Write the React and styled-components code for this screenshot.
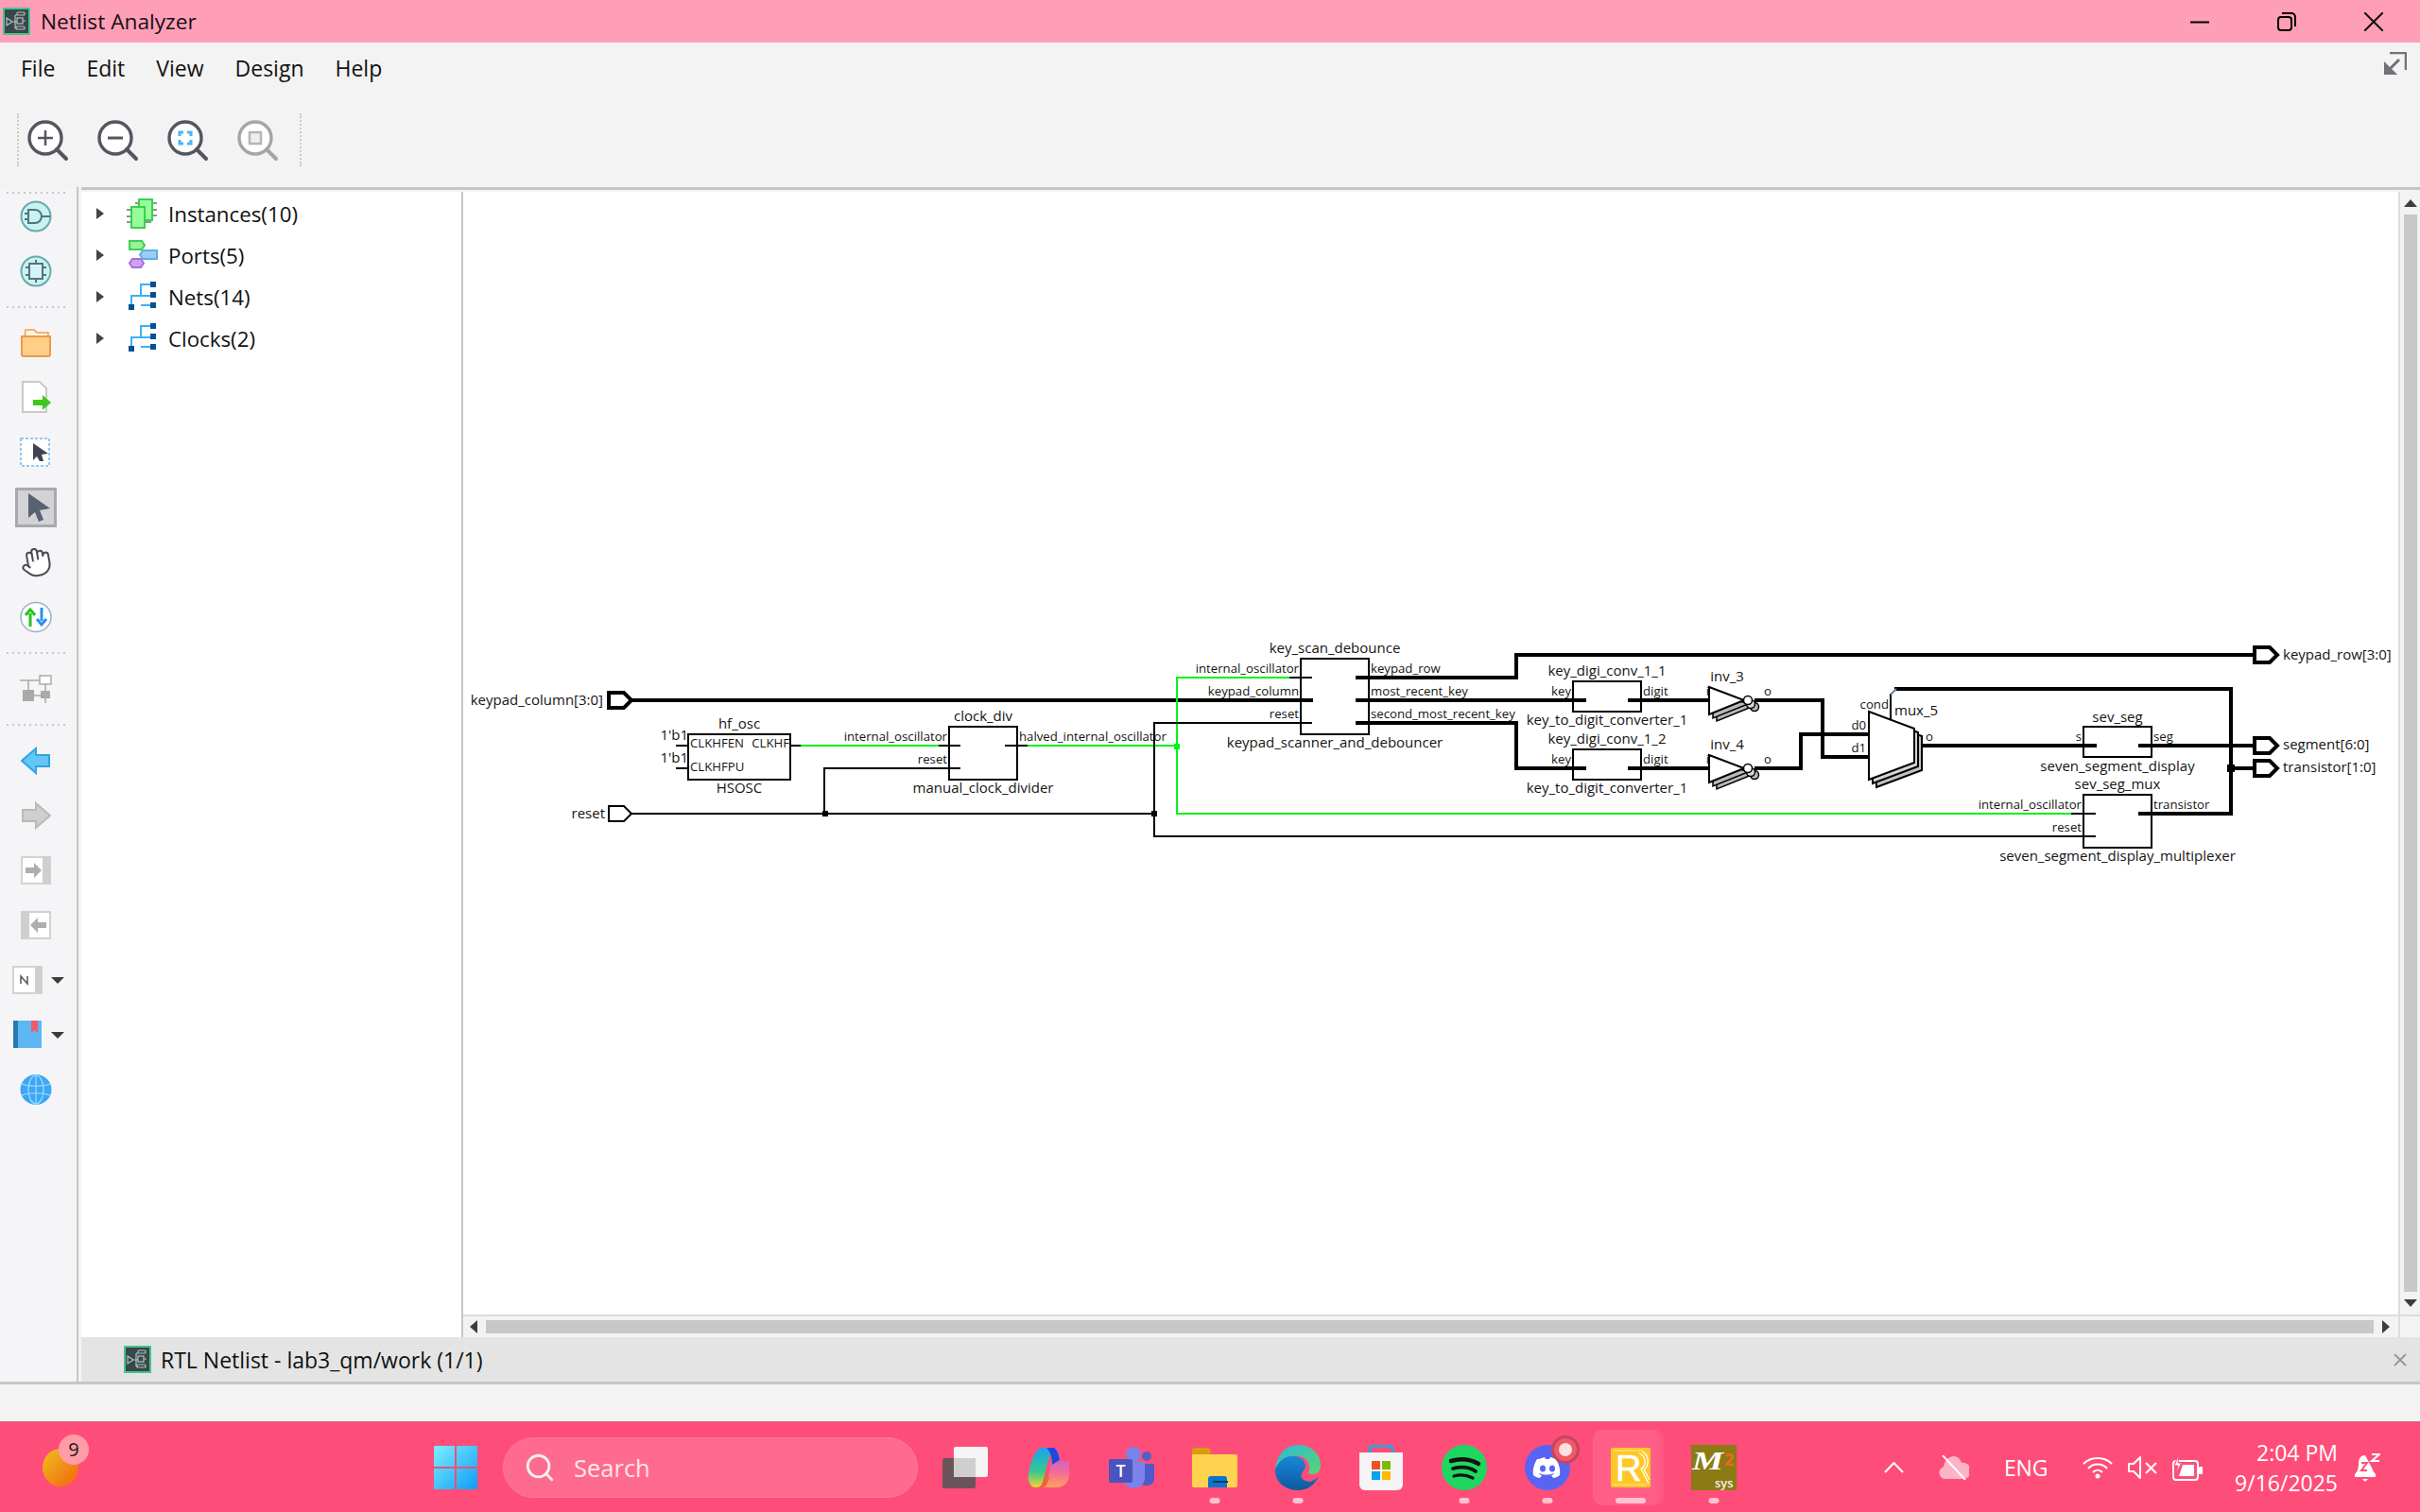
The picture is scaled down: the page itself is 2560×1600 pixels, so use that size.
import React from 'react';
import styled, { createGlobalStyle } from 'styled-components';
import { Search, Hand } from 'lucide-react';

const UI_FONT = '"Open Sans", "Noto Sans", "Liberation Sans", sans-serif';

const GlobalStyle = createGlobalStyle`
	html, body { margin: 0; padding: 0; background: #f3f3f3; }
	* { box-sizing: border-box; }
`;

const Screen = styled.div`
	width: 2560px;
	height: 1600px;
	display: flex;
	flex-direction: column;
	overflow: hidden;
	font-family: ${UI_FONT};
	color: #111;
`;

/* ---- title + menu ---- */
const TitleBar = styled.div`
	height: 45px;
	background: #ff9fb7;
	display: flex;
	align-items: center;
	padding-left: 3px;
`;
const TitleText = styled.span`
	font-size: 22.7px;
	margin-left: 11px;
	color: #141014;
`;
const WindowButtons = styled.div`
	margin-left: auto;
	display: flex;
	align-items: center;
	gap: 72px;
	padding-right: 39px;
`;
const MenuBar = styled.div`
	height: 54px;
	background: #f3f3f3;
	display: flex;
	align-items: center;
	padding: 0 14px 0 22px;
	gap: 33px;
	font-size: 23px;
`;
const MenuItem = styled.span``;
const ExpandButton = styled.div`
	margin-left: auto;
	display: flex;
	margin-top: -10px;
`;
const ToolBar = styled.div`
	height: 99px;
	background: #f3f3f3;
	display: flex;
	align-items: center;
`;
const ToolGroup = styled.div`
	margin-left: 18px;
	height: 56px;
	width: 301px;
	margin-top: -2px;
	border-left: 2px dotted #c9c9c9;
	border-right: 2px dotted #c9c9c9;
	display: flex;
	align-items: center;
	padding: 3px 0 0 9px;
	gap: 30px;
`;

/* ---- body ---- */
const Body = styled.div`
	height: 1267px;
	display: flex;
	background: #f3f3f3;
	border-bottom: 3px solid #c6c6c6;
`;
const Rail = styled.div`
	width: 83px;
	flex: none;
	background: #f5f5f8;
	border-right: 2px solid #c6c6c6;
	display: flex;
	flex-direction: column;
	align-items: center;
	gap: 18px;
	padding: 6px 5px 0 0;
`;
const RailRule = styled.div`
	width: 62px;
	height: 2px;
	margin: -1px 0;
	flex: none;
	background: repeating-linear-gradient(90deg, #c8c8cc 0 2px, transparent 2px 6px);
	&:first-child { margin-bottom: -14px; }
`;
const RailButton = styled.div`
	width: ${p => (p.$menu ? '55px' : '42px')};
	height: 40px;
	flex: none;
	margin-left: ${p => (p.$menu ? '4px' : '0')};
	display: flex;
	align-items: center;
	justify-content: ${p => (p.$menu ? 'space-between' : 'center')};
	background: ${p => (p.$active ? '#d3d3d6' : 'transparent')};
	outline: ${p => (p.$active ? '3px solid #a9a9ad' : 'none')};
	outline-offset: -2px;
`;
const Caret = styled.span`
	width: 0;
	height: 0;
	border-left: 7px solid transparent;
	border-right: 7px solid transparent;
	border-top: 7px solid #3c3c3c;
`;
const Main = styled.div`
	flex: 1;
	margin-left: 3px;
	display: flex;
	flex-direction: column;
	min-width: 0;
`;
const TopRule = styled.div`
	height: 5px;
	border-top: 3px solid #c6c6c6;
	flex: none;
`;
const Workspace = styled.div`
	flex: 1;
	display: flex;
	min-height: 0;
`;
const TreePanel = styled.div`
	width: 404px;
	flex: none;
	background: #fff;
	border-right: 2px solid #c6c6c6;
	padding-top: 1px;
`;
const TreeRow = styled.div`
	height: 44px;
	display: flex;
	align-items: center;
	font-size: 22.3px;
	padding-left: 16px;
`;
const TreeArrow = styled.span`
	width: 0;
	height: 0;
	border-top: 6.5px solid transparent;
	border-bottom: 6.5px solid transparent;
	border-left: 8px solid #444;
	margin-right: 24px;
`;
const TreeIcon = styled.span`
	width: 36px;
	display: flex;
	margin-right: 8px;
`;
const CanvasColumn = styled.div`
	flex: 1;
	display: flex;
	flex-direction: column;
	min-width: 0;
`;
const CanvasRow = styled.div`
	height: 1188px;
	display: flex;
`;
const SchematicWrap = styled.div`
	width: 2047px;
	background: #fff;
`;
const VScroll = styled.div`
	width: 23px;
	background: #f3f3f3;
	border-left: 2px solid #dcdcdc;
	display: flex;
	flex-direction: column;
	align-items: center;
	padding: 8px 0 8px 1px;
`;
const ScrollArrow = styled.span`
	width: 0;
	height: 0;
	flex: none;
	${p => p.$dir === 'up' && 'border-left:7px solid transparent;border-right:7px solid transparent;border-bottom:8px solid #3e3e3e;'}
	${p => p.$dir === 'down' && 'border-left:7px solid transparent;border-right:7px solid transparent;border-top:8px solid #3e3e3e;'}
	${p => p.$dir === 'left' && 'border-top:7px solid transparent;border-bottom:7px solid transparent;border-right:8px solid #3e3e3e;'}
	${p => p.$dir === 'right' && 'border-top:7px solid transparent;border-bottom:7px solid transparent;border-left:8px solid #3e3e3e;'}
`;
const VThumb = styled.div`
	flex: 1;
	width: 14px;
	margin: 8px 0;
	background: #c8c8c8;
`;
const HScroll = styled.div`
	height: 24px;
	background: #f3f3f3;
	border-top: 2px solid #dcdcdc;
	display: flex;
	align-items: center;
	padding-left: 7px;
`;
const HThumb = styled.div`
	width: 1997px;
	height: 14px;
	margin: 0 9px;
	background: #c8c8c8;
`;
const Corner = styled.div`
	margin-left: auto;
	width: 23px;
	height: 100%;
	border-left: 2px solid #dcdcdc;
`;
const TabStrip = styled.div`
	height: 47px;
	flex: none;
	background: #e4e4e4;
	display: flex;
	align-items: center;
	padding: 0 14px 0 45px;
	font-size: 23px;
`;
const TabTitle = styled.span`
	margin-left: 10px;
`;
const TabClose = styled.span`
	margin-left: auto;
	display: flex;
`;
const StatusBar = styled.div`
	height: 39px;
	background: #f3f3f3;
`;

/* ---- taskbar ---- */
const Taskbar = styled.div`
	height: 96px;
	background: #ff4d79;
	border-top: 1px solid #cc6480;
	display: flex;
	align-items: center;
	padding: 0 42px 0 45px;
	color: #fff;
`;
const Weather = styled.div`
	position: relative;
	width: 38px;
	height: 40px;
	margin-right: 376px;
	border-radius: 50%;
	background: linear-gradient(135deg, #efc01f, #f4620f);
`;
const WeatherBadge = styled.span`
	position: absolute;
	left: 17px;
	top: -15px;
	width: 32px;
	height: 32px;
	border-radius: 50%;
	background: #ff9ca6;
	color: #1a1a1a;
	font-size: 20px;
	display: flex;
	align-items: center;
	justify-content: center;
`;
const SearchBox = styled.div`
	width: 439px;
	height: 64px;
	margin-left: 27px;
	margin-right: 6px;
	border-radius: 32px;
	background: #ff6a90;
	border: 1px solid #ff789a;
	display: flex;
	align-items: center;
	padding-left: 21px;
	gap: 19px;
	font-size: 25.5px;
	color: #ffe6ec;
`;
const AppSlot = styled.div`
	position: relative;
	width: 88px;
	height: 80px;
	display: flex;
	align-items: center;
	justify-content: center;
	${p => p.$active && `
		&::before {
			content: '';
			position: absolute;
			inset: 0 14px 0 4px;
			border-radius: 10px;
			background: rgba(255,255,255,0.1);
			box-shadow: 5px 0 0 rgba(255,255,255,0.07);
		}
	`}
	& > svg { position: relative; }
`;
const RunDot = styled.span`
	position: absolute;
	left: 50%;
	bottom: 2px;
	transform: translateX(-50%);
	height: 6px;
	border-radius: 3px;
	width: ${p => (p.$wide ? '32px' : '11px')};
	background: #ffc2d2;
`;
const AppBadge = styled.span`
	position: absolute;
	right: 10px;
	top: 6px;
	width: 30px;
	height: 30px;
	border-radius: 50%;
	background: #ee5a66;
	border: 3px solid #c4465c;
	display: flex;
	align-items: center;
	justify-content: center;
	&::after {
		content: '';
		width: 14px;
		height: 14px;
		border-radius: 50%;
		background: #ffe0e0;
	}
`;
const Tray = styled.div`
	margin-left: auto;
	display: flex;
	align-items: center;
	gap: 37px;
`;
const TrayText = styled.span`
	font-size: 23px;
	width: 46px;
	letter-spacing: -0.2px;
`;
const QuickGroup = styled.div`
	display: flex;
	align-items: center;
	gap: 16px;
`;
const Clock = styled.div`
	width: 111px;
	margin-left: -5px;
	margin-right: -20px;
	text-align: right;
	font-size: 23px;
	line-height: 32px;
	white-space: nowrap;
`;
const ClockRow = styled.div``;

/* ---- schematic bits ---- */
const SchemLabel = styled.text`
	font-family: ${UI_FONT};
	font-size: ${p => p.$size || 15}px;
	fill: #141414;
	dominant-baseline: central;
	text-anchor: ${p => p.$a || 'start'};
	transform: translateY(-1px);
`;

const GREEN = '#00f21a';

const Wire = ({ d, w = 2, c = '#000' }) => <path d={d} fill="none" stroke={c} strokeWidth={w} shapeRendering="crispEdges" strokeLinecap="square" />;

const Box = ({ x, y, w, h }) => <rect x={x} y={y} width={w} height={h} fill="#fff" stroke="#000" strokeWidth="2" shapeRendering="crispEdges" />;

const Port = ({ x, y, w = 2 }) => (
	<path d={`M${x} ${y - 8}H${x + 16}L${x + 24} ${y}L${x + 16} ${y + 8}H${x}Z`} fill="#fff" stroke="#000" strokeWidth={w} strokeLinejoin="miter" />
);

const Inverter = ({ y }) => (
	<g stroke="#000" strokeWidth="1.5">
		<path d={`M1816 ${y - 7}L1853 ${y + 7}L1816 ${y + 22}Z`} fill="#b9b9b9" />
		<circle cx="1856" cy={y + 7} r="4.5" fill="#b9b9b9" />
		<path d={`M1812 ${y - 10}L1849 ${y + 4}L1812 ${y + 19}Z`} fill="#b9b9b9" />
		<circle cx="1852" cy={y + 4} r="4.5" fill="#d8d8d8" />
		<path d={`M1808 ${y - 14}L1845 ${y}L1808 ${y + 15}Z`} fill="#fff" strokeWidth="2" />
		<circle cx="1849" cy={y} r="4.5" fill="#fff" />
	</g>
);

const S = 13.2; // size of the pin labels

const Schematic = () => (
	<svg width="2047" height="1188" viewBox="490 203 2047 1188" style={{ display: 'block' }}>
		{/* boxes sit under the stub wires */}
		<Box x={728} y={777} w={108} h={48} />
		<Box x={1004} y={769} w={72} h={56} />
		<Box x={1376} y={697} w={72} h={80} />
		<Box x={1664} y={721} w={72} h={32} />
		<Box x={1664} y={793} w={72} h={32} />
		<Box x={2204} y={769} w={72} h={32} />
		<Box x={2204} y={841} w={72} h={56} />

		{/* nets */}
		<Wire d="M668 741H1387" w={4} />
		<Wire d="M668 861H1221" />
		<Wire d="M872 861V813H1015" />
		<Wire d="M716 789H728M716 813H728" />
		<Wire d="M836 789H848M992 789H1015M1064 789H1088" />
		<Wire d="M848 789H992" c={GREEN} />
		<Wire d="M1088 789H1245" c={GREEN} />
		<Wire d="M1245 861V717H1365" c={GREEN} />
		<Wire d="M1245 861H2192" c={GREEN} />
		<Wire d="M1365 717H1387M2192 861H2216" />
		<Wire d="M1387 765H1221V885H2216" />
		<Wire d="M1436 717H1604V693H2385" w={4} />
		<Wire d="M1436 741H1676" w={4} />
		<Wire d="M1436 765H1604V813H1676" w={4} />
		<Wire d="M1724 741H1808" w={4} />
		<Wire d="M1724 813H1808" w={4} />
		<Wire d="M1858 741H1928V801H1976" w={4} />
		<Wire d="M1858 813H1905V777H1976" w={4} />
		<Wire d="M2025 789H2216" w={4} />
		<Wire d="M2264 789H2385" w={4} />
		<Wire d="M2264 861H2360V729H2006" w={4} />
		<Wire d="M2360 813H2385" w={4} />
		<Wire d="M2000 762V735" />
		<path d="M2000 735L2006 729" stroke="#6d7fa3" strokeWidth="2" />

		{/* junctions */}
		<rect x={870} y={858} width={6} height={6} />
		<rect x={1218} y={858} width={6} height={6} />
		<rect x={1242} y={787} width={6} height={6} fill={GREEN} />
		<rect x={2356} y={809} width={8} height={8} />

		{/* ports */}
		<Port x={644} y={741} w={4} />
		<Port x={644} y={861} />
		<Port x={2385} y={693} w={4} />
		<Port x={2385} y={789} w={4} />
		<Port x={2385} y={813} w={4} />

		<Inverter y={741} />
		<Inverter y={813} />

		{/* mux with its stacked copies */}
		<g stroke="#000" strokeWidth="2">
			<path d="M1985 761L2033 779V815L1985 833Z" fill="#c4c4c4" />
			<path d="M1981 757L2029 775V811L1981 829Z" fill="#d4d4d4" />
			<path d="M1977 753L2025 771V807L1977 825Z" fill="#fff" />
		</g>

		<SchemLabel x={638} y={741} $a="end">keypad_column[3:0]</SchemLabel>
		<SchemLabel x={640} y={861} $a="end">reset</SchemLabel>
		<SchemLabel x={782} y={766} $a="middle">hf_osc</SchemLabel>
		<SchemLabel x={728} y={778} $a="end">1'b1</SchemLabel>
		<SchemLabel x={728} y={802} $a="end">1'b1</SchemLabel>
		<SchemLabel x={730} y={787} $size={S}>CLKHFEN</SchemLabel>
		<SchemLabel x={835} y={787} $size={S} $a="end">CLKHF</SchemLabel>
		<SchemLabel x={730} y={812} $size={S}>CLKHFPU</SchemLabel>
		<SchemLabel x={782} y={834} $a="middle">HSOSC</SchemLabel>
		<SchemLabel x={1040} y={758} $a="middle">clock_div</SchemLabel>
		<SchemLabel x={1040} y={834} $a="middle">manual_clock_divider</SchemLabel>
		<SchemLabel x={1002} y={780} $size={S} $a="end">internal_oscillator</SchemLabel>
		<SchemLabel x={1002} y={804} $size={S} $a="end">reset</SchemLabel>
		<SchemLabel x={1078} y={780} $size={S}>halved_internal_oscillator</SchemLabel>

		<SchemLabel x={1412} y={686} $a="middle">key_scan_debounce</SchemLabel>
		<SchemLabel x={1412} y={786} $a="middle">keypad_scanner_and_debouncer</SchemLabel>
		<SchemLabel x={1374} y={708} $size={S} $a="end">internal_oscillator</SchemLabel>
		<SchemLabel x={1374} y={732} $size={S} $a="end">keypad_column</SchemLabel>
		<SchemLabel x={1374} y={756} $size={S} $a="end">reset</SchemLabel>
		<SchemLabel x={1450} y={708} $size={S}>keypad_row</SchemLabel>
		<SchemLabel x={1450} y={732} $size={S}>most_recent_key</SchemLabel>
		<SchemLabel x={1450} y={756} $size={S}>second_most_recent_key</SchemLabel>

		<SchemLabel x={1700} y={710} $a="middle">key_digi_conv_1_1</SchemLabel>
		<SchemLabel x={1700} y={762} $a="middle">key_to_digit_converter_1</SchemLabel>
		<SchemLabel x={1700} y={782} $a="middle">key_digi_conv_1_2</SchemLabel>
		<SchemLabel x={1700} y={834} $a="middle">key_to_digit_converter_1</SchemLabel>
		<SchemLabel x={1662} y={732} $size={S} $a="end">key</SchemLabel>
		<SchemLabel x={1738} y={732} $size={S}>digit</SchemLabel>
		<SchemLabel x={1662} y={804} $size={S} $a="end">key</SchemLabel>
		<SchemLabel x={1738} y={804} $size={S}>digit</SchemLabel>

		<SchemLabel x={1827} y={716} $a="middle">inv_3</SchemLabel>
		<SchemLabel x={1827} y={788} $a="middle">inv_4</SchemLabel>
		<SchemLabel x={1808} y={732} $size={S} $a="end">i</SchemLabel>
		<SchemLabel x={1808} y={804} $size={S} $a="end">i</SchemLabel>
		<SchemLabel x={1866} y={732} $size={S}>o</SchemLabel>
		<SchemLabel x={1866} y={804} $size={S}>o</SchemLabel>

		<SchemLabel x={1998} y={746} $size={S} $a="end">cond</SchemLabel>
		<SchemLabel x={2004} y={752}>mux_5</SchemLabel>
		<SchemLabel x={1974} y={768} $size={S} $a="end">d0</SchemLabel>
		<SchemLabel x={1974} y={792} $size={S} $a="end">d1</SchemLabel>
		<SchemLabel x={2037} y={780} $size={S}>o</SchemLabel>

		<SchemLabel x={2240} y={759} $a="middle">sev_seg</SchemLabel>
		<SchemLabel x={2240} y={811} $a="middle">seven_segment_display</SchemLabel>
		<SchemLabel x={2202} y={780} $size={S} $a="end">s</SchemLabel>
		<SchemLabel x={2278} y={780} $size={S}>seg</SchemLabel>
		<SchemLabel x={2240} y={830} $a="middle">sev_seg_mux</SchemLabel>
		<SchemLabel x={2240} y={906} $a="middle">seven_segment_display_multiplexer</SchemLabel>
		<SchemLabel x={2202} y={852} $size={S} $a="end">internal_oscillator</SchemLabel>
		<SchemLabel x={2202} y={876} $size={S} $a="end">reset</SchemLabel>
		<SchemLabel x={2278} y={852} $size={S}>transistor</SchemLabel>

		<SchemLabel x={2415} y={693}>keypad_row[3:0]</SchemLabel>
		<SchemLabel x={2415} y={788}>segment[6:0]</SchemLabel>
		<SchemLabel x={2415} y={812}>transistor[1:0]</SchemLabel>
	</svg>
);

/* ---- icons ---- */
const NetlistLogo = ({ size = 29 }) => (
	<svg width={size} height={size} viewBox="0 0 29 29">
		<rect x="1" y="1" width="27" height="27" fill="#38474a" stroke="#45c48e" strokeWidth="2" />
		<g fill="none" stroke="#b4c4c0" strokeWidth="1.2">
			<path d="M4 11l6 4-6 4zM10 15h5" />
			<rect x="15" y="11" width="6" height="6" />
			<rect x="15" y="5" width="8" height="3" rx="1" />
			<path d="M13 8h2M13 8v14M13 22h2M21 14h3" />
			<rect x="14" y="20" width="9" height="3" rx="1" />
		</g>
	</svg>
);

const ZoomIcon = ({ stroke = '#54565f', children }) => (
	<svg width="44" height="44" viewBox="0 0 44 44">
		<circle cx="19" cy="19" r="17" fill="#fff" stroke={stroke} strokeWidth="3.4" />
		<path d="M31 31L41 41" stroke={stroke} strokeWidth="4" strokeLinecap="round" />
		{children}
	</svg>
);

const InstancesIcon = () => (
	<svg width="34" height="34" viewBox="0 0 34 34">
		<g stroke="#6d7070" strokeWidth="1.5"><path d="M9 6h4M9 11h4M26 6h6M26 13h6M26 19h6M0 13h5M0 20h5M0 26h5M19 20h7M19 26h7" /></g>
		<rect x="13" y="2" width="14" height="22" fill="#98fb9c" stroke="#35d24c" strokeWidth="2" />
		<rect x="5" y="10" width="14" height="22" fill="#98fb9c" stroke="#35d24c" strokeWidth="2" />
	</svg>
);
const PortsIcon = () => (
	<svg width="34" height="34" viewBox="0 0 34 34">
		<path d="M3 2h13l3 4.500-3 4.500H3z" fill="#97f09b" stroke="#3ed151" strokeWidth="2" />
		<path d="M17 12h15v9H17l-3-4.500z" fill="#9cccf5" stroke="#5eaeea" strokeWidth="2" />
		<path d="M6 21h9l3 4.500-3 4.500H6l-3-4.500z" fill="#cda2f2" stroke="#a66fe0" strokeWidth="2" />
	</svg>
);
const NetsIcon = () => (
	<svg width="34" height="34" viewBox="0 0 34 34">
		<path d="M5 28V16H15V4H27M15 16H27M15 26H27" fill="none" stroke="#3cb2f8" strokeWidth="2" />
		<rect x="2" y="25" width="6" height="6" fill="#064f91" />
		<rect x="25" y="1" width="6" height="6" fill="#064f91" />
		<rect x="25" y="12" width="6" height="6" fill="#064f91" />
		<rect x="25" y="23" width="6" height="6" fill="#064f91" />
	</svg>
);

const GateDisc = ({ children }) => (
	<svg width="34" height="34" viewBox="0 0 34 34">
		<circle cx="17" cy="17" r="15.500" fill="#c9f2f2" stroke="#6aa9a9" strokeWidth="2" />
		<g fill="none" stroke="#54737a" strokeWidth="2">{children}</g>
	</svg>
);
const Folder = () => (
	<svg width="34" height="30" viewBox="0 0 34 30">
		<path d="M6 1h9l3 3h12v6H5z" fill="#fff3dc" stroke="#ec9f4d" strokeWidth="1.5" />
		<path d="M2 8h30v19a2 2 0 0 1-2 2H4a2 2 0 0 1-2-2z" fill="#ffcf85" stroke="#eb9b4b" strokeWidth="2" />
	</svg>
);
const DocArrow = () => (
	<svg width="34" height="36" viewBox="0 0 34 36">
		<path d="M3 1h18l7 7v25H3z" fill="#fff" stroke="#c9c9c9" strokeWidth="2" />
		<path d="M14 20h10v-5l9 8-9 8v-5H14z" fill="#3ec81f" />
	</svg>
);
const Pointer = ({ fill = '#4a5060' }) => <path d="M10 3L33 19L22 21L26 31L21 33L17 23L10 29Z" fill={fill} />;
const SelectBox = () => (
	<svg width="34" height="32" viewBox="0 0 34 32">
		<rect x="1" y="1" width="30" height="29" fill="#fff" stroke="#6fb9ee" strokeWidth="1.5" strokeDasharray="3 2" />
		<path d="M14 6L30 17L23 18L25 25H21L18 20L14 24Z" fill="#3f4452" />
	</svg>
);
const PointerTool = () => (
	<svg width="36" height="36" viewBox="0 0 36 36"><Pointer fill="#596173" /></svg>
);
const SwapDisc = () => (
	<svg width="34" height="34" viewBox="0 0 34 34">
		<ellipse cx="17" cy="17" rx="16" ry="15.500" fill="#fff" stroke="#9cb0c4" strokeWidth="1.5" />
		<path d="M11 27V13M6 15l5-6 5 6" fill="none" stroke="#26c41c" strokeWidth="3" />
		<path d="M23 7v14M18 19l5 6 5-6" fill="none" stroke="#2b92ee" strokeWidth="3" />
	</svg>
);
const Hierarchy = () => (
	<svg width="34" height="30" viewBox="0 0 34 30">
		<rect x="21" y="1" width="12" height="9" fill="#fff" stroke="#aaa" strokeWidth="1.5" />
		<path d="M0 6H21M9 6V17M14 22H27M27 10V30" stroke="#a8a8a8" strokeWidth="1.500" fill="none" />
		<rect x="3" y="16" width="12" height="12" fill="#a9a9a9" />
		<rect x="22" y="17" width="10" height="8" fill="#a9a9a9" />
	</svg>
);
const BlueArrow = () => (
	<svg width="32" height="30" viewBox="0 0 32 30">
		<path d="M1 15L16 2V9H30V21H16V28Z" fill="#62c7f6" stroke="#2fa3e2" strokeWidth="2" />
	</svg>
);
const GreyArrow = () => (
	<svg width="32" height="30" viewBox="0 0 32 30">
		<path d="M31 15L16 2V9H2V21H16V28Z" fill="#cfcfcf" stroke="#b9b9b9" strokeWidth="2" />
	</svg>
);
const PanelArrow = ({ flip }) => (
	<svg width="32" height="30" viewBox="0 0 32 30" style={flip ? { transform: 'scaleX(-1)' } : undefined}>
		<rect x="1" y="1" width="30" height="28" fill="#fff" stroke="#d2d2d2" strokeWidth="2" />
		<rect x="23" y="1" width="8" height="28" fill="#cfcfcf" />
		<path d="M5 12h9V7l8 8-8 8v-5H5z" fill="#adadad" />
	</svg>
);
const NPage = () => (
	<svg width="32" height="30" viewBox="0 0 32 30">
		<rect x="1" y="1" width="30" height="28" fill="#fff" stroke="#d2d2d2" strokeWidth="2" />
		<rect x="24" y="1" width="7" height="28" fill="#cfcfcf" />
		<path d="M9 19v-8l7 8v-8" fill="none" stroke="#555" strokeWidth="1.500" />
	</svg>
);
const BookIcon = () => (
	<svg width="32" height="30" viewBox="0 0 32 30">
		<rect x="1" y="0" width="30" height="29" fill="#5bb8f2" />
		<rect x="1" y="0" width="5" height="29" fill="#2a78ad" />
		<path d="M20 0h7v13l-3.500-3-3.500 3z" fill="#f0596a" />
	</svg>
);
const Globe = () => (
	<svg width="34" height="32" viewBox="0 0 34 32">
		<ellipse cx="17" cy="16" rx="16.500" ry="16" fill="#3ba7f5" />
		<g fill="none" stroke="#a7dbff" strokeWidth="1.2">
			<ellipse cx="17" cy="16" rx="8" ry="15" />
			<path d="M2 10c8 3 22 3 30 0M2 22c8-3 22-3 30 0M17 1v30" />
		</g>
	</svg>
);

const WinLogo = () => (
	<svg width="46" height="46" viewBox="0 0 46 46">
		<defs>
			<linearGradient id="winG" x1="0" y1="0" x2="1" y2="1">
				<stop offset="0" stopColor="#7ceeff" />
				<stop offset="1" stopColor="#0e9cf7" />
			</linearGradient>
		</defs>
		<path d="M1 0H22V22H0V1ZM24 0H45a1 1 0 0 1 1 1V22H24ZM0 24H22V46H1a1 1 0 0 1-1-1ZM24 24H46V45a1 1 0 0 1-1 1H24Z" fill="url(#winG)" />
	</svg>
);
const TaskView = () => (
	<svg width="48" height="44" viewBox="0 0 48 44">
		<rect x="12" y="0" width="36" height="32" rx="2" fill="#f5f5f5" />
		<rect x="0" y="12" width="35" height="32" rx="2" fill="#555" fillOpacity=".88" />
		<rect x="12" y="12" width="23" height="20" fill="#cfcfcf" />
	</svg>
);
const Copilot = () => (
	<svg width="44" height="42" viewBox="0 0 44 42">
		<defs>
			<linearGradient id="copA" x1="0" y1="0" x2="0" y2="1">
				<stop offset="0" stopColor="#1aa3ef" /><stop offset=".6" stopColor="#37c98f" /><stop offset="1" stopColor="#f4d430" />
			</linearGradient>
			<linearGradient id="copB" x1="0" y1="0" x2="0" y2="1">
				<stop offset="0" stopColor="#b15cf0" /><stop offset=".6" stopColor="#f06a9a" /><stop offset="1" stopColor="#ffa25c" />
			</linearGradient>
		</defs>
		<path d="M14 0H28C24 6 20 18 18 30C17 38 14 42 9 42C3 42 0 36 1 28C3 16 8 2 14 0Z" fill="url(#copA)" />
		<path d="M28 0C33 2 34 8 35 14H44V30C43 38 38 42 30 42H16C21 36 24 24 25 14C26 8 27 3 28 0Z" fill="url(#copB)" />
		<path d="M20 0H28C32 3 33 8 34 13L26 18C26 10 24 4 20 0Z" fill="#2446d8" />
		<path d="M14 42C16 38 17 32 19 26L23 32C22 36 20 40 17 42Z" fill="#f2603e" />
	</svg>
);
const Teams = () => (
	<svg width="48" height="44" viewBox="0 0 48 44">
		<circle cx="40" cy="10" r="5" fill="#5560c4" />
		<path d="M33 18h15v16a7 7 0 0 1-7 7h-3a6 6 0 0 1-5-3z" fill="#5059c9" />
		<circle cx="26" cy="8" r="8" fill="#7b83eb" />
		<path d="M14 16h24v18a11 11 0 0 1-11 10 13 13 0 0 1-13-12z" fill="#7b83eb" />
		<rect x="0" y="13" width="25" height="25" rx="2" fill="#4b53bc" />
		<text x="12.500" y="32" fontFamily={UI_FONT} fontSize="18" fontWeight="600" fill="#fff" textAnchor="middle">T</text>
	</svg>
);
const Explorer = () => (
	<svg width="48" height="42" viewBox="0 0 48 42">
		<path d="M0 3a3 3 0 0 1 3-3h13a4 4 0 0 1 3 2l1 3a4 4 0 0 1-4 3H0z" fill="#d99c0c" />
		<path d="M0 7H46a2 2 0 0 1 2 2V40a2 2 0 0 1-2 2H2a2 2 0 0 1-2-2z" fill="#ffd24f" />
		<path d="M20 42V33a3 3 0 0 1 3-3h14a3 3 0 0 1 3 3v9z" fill="#0f75c8" transform="translate(-3 0)" />
		<rect x="22" y="35" width="16" height="2" fill="#063f78" />
	</svg>
);
const Edge = () => (
	<svg width="48" height="48" viewBox="0 0 48 48">
		<defs>
			<linearGradient id="edgeTop" x1="0" y1="0" x2="1" y2="1">
				<stop offset="0" stopColor="#2fb8dc" /><stop offset="1" stopColor="#58d66c" />
			</linearGradient>
			<linearGradient id="edgeLow" x1="0" y1="0" x2="0" y2="1">
				<stop offset="0" stopColor="#1a87d8" /><stop offset="1" stopColor="#0c5aa0" />
			</linearGradient>
		</defs>
		<path d="M24 0C38 0 48 9 48 22C48 30 40 33 35 30C38 24 36 14 26 12C14 10 4 16 0 26C1 11 11 0 24 0Z" fill="url(#edgeTop)" />
		<path d="M0 26C4 14 16 9 25 13C32 16 34 23 30 27C26 32 27 36 32 38C36 40 42 38 46 33C42 43 33 48 24 48C10 48 -1 38 0 26Z" fill="url(#edgeLow)" />
	</svg>
);
const Store = () => (
	<svg width="46" height="48" viewBox="0 0 46 48">
		<path d="M11 12V5a4 4 0 0 1 4-4h16a4 4 0 0 1 4 4v7" fill="none" stroke="#1fa8e0" strokeWidth="3" />
		<path d="M0 8H46V42a6 6 0 0 1-6 6H6a6 6 0 0 1-6-6z" fill="#f4f4f4" />
		<rect x="13" y="17" width="9" height="9" fill="#f25022" />
		<rect x="24" y="17" width="9" height="9" fill="#7fba00" />
		<rect x="13" y="28" width="9" height="9" fill="#00a4ef" />
		<rect x="24" y="28" width="9" height="9" fill="#ffb900" />
	</svg>
);
const Spotify = () => (
	<svg width="48" height="48" viewBox="0 0 48 48">
		<circle cx="24" cy="24" r="24" fill="#1ed760" />
		<g fill="none" stroke="#121212" strokeLinecap="round">
			<path d="M10 17c10-3 20-2 29 3" strokeWidth="4.500" />
			<path d="M12 25c8-2 17-2 24 3" strokeWidth="3.800" />
			<path d="M13 33c7-2 14-1 20 2" strokeWidth="3.200" />
		</g>
	</svg>
);
const Discord = () => (
	<svg width="48" height="48" viewBox="0 0 48 48">
		<circle cx="24" cy="24" r="24" fill="#5865f2" />
		<path d="M15 15c3-1 5-2 6-2l1 2h4l1-2c1 0 3 1 6 2 3 5 5 11 4 17-2 2-5 3-7 3l-2-3 3-1-1-1c-4 2-10 2-14 0l-1 1 3 1-2 3c-2 0-5-1-7-3-1-6 1-12 4-17z" fill="#fff" />
		<ellipse cx="19" cy="25" rx="3" ry="3.500" fill="#5865f2" />
		<ellipse cx="29" cy="25" rx="3" ry="3.500" fill="#5865f2" />
	</svg>
);
const RIcon = () => (
	<svg width="42" height="42" viewBox="0 0 42 42">
		<rect width="42" height="42" rx="2" fill="#ffc726" />
		<path d="M2 3H34M2 39H38" stroke="#fff" strokeWidth="1" strokeOpacity=".55" />
		<text x="5" y="35" fontFamily='"Liberation Sans", sans-serif' fontSize="38" fill="#fff" stroke="#fff" strokeWidth=".6">R</text>
		<path d="M30 6C38 9 38 19 32 22L40 38M33 4C41 8 41 19 35 23L41 34" fill="none" stroke="#fff" strokeWidth="1.300" />
	</svg>
);
const M2Icon = () => (
	<svg width="48" height="48" viewBox="0 0 48 48">
		<rect width="48" height="48" fill="#8c7a14" />
		<text x="1" y="26" fontFamily='"Liberation Serif", serif' fontStyle="italic" fontSize="28" fontWeight="700" fill="#fff" textLength="33" lengthAdjust="spacingAndGlyphs">M</text>
		<text x="35" y="22" fontFamily={UI_FONT} fontSize="18" fontWeight="700" fill="#ee6a1e">2</text>
		<text x="25" y="45" fontFamily={UI_FONT} fontSize="13" fontWeight="600" fill="#f2f2e6">sys</text>
	</svg>
);
const Chevron = () => (
	<svg width="21" height="12" viewBox="0 0 21 12"><path d="M1 11L10.500 1L20 11" fill="none" stroke="#fff" strokeWidth="2" /></svg>
);
const CloudOff = () => (
	<svg width="32" height="26" viewBox="0 0 32 26">
		<path d="M7 25a6.500 6.500 0 0 1-2-12.700C6 5 11 1 16 1c4 0 7 3 8 7a6.500 6.500 0 0 1 3 17z" fill="#ffb3c9" />
		<path d="M4 0L28 26" stroke="#fff" strokeWidth="2" />
	</svg>
);
const Wifi = () => (
	<svg width="32" height="24" viewBox="0 0 32 24">
		<g fill="none" stroke="#fff" strokeWidth="2">
			<path d="M1 8C9 0 23 0 31 8" />
			<path d="M6 13C11 7 21 7 26 13" />
			<path d="M11 17C14 14 18 14 21 17" />
		</g>
		<circle cx="16" cy="21" r="2.500" fill="#fff" />
	</svg>
);
const VolumeMute = () => (
	<svg width="31" height="24" viewBox="0 0 31 24">
		<path d="M1 8H6L13 1V23L6 16H1Z" fill="none" stroke="#fff" strokeWidth="2" strokeLinejoin="round" />
		<path d="M19 7L30 18M30 7L19 18" stroke="#fff" strokeWidth="2" />
	</svg>
);
const Battery = () => (
	<svg width="32" height="28" viewBox="0 0 32 28">
		<rect x="1" y="7" width="26" height="20" rx="3" fill="none" stroke="#fff" strokeWidth="2" />
		<rect x="28" y="13" width="4" height="8" rx="1" fill="#fff" />
		<path d="M7 23L11 11H23V23Z" fill="#fff" />
		<path d="M7 0L2 12H6L3 21L10 9H6Z" fill="#fff" stroke="#ff4d79" strokeWidth="1" />
	</svg>
);
const BellSnooze = () => (
	<svg width="28" height="32" viewBox="0 0 28 32">
		<path d="M12 3C6 3 5 8 5 13C5 18 3 21 1 23V26H23V23C21 21 20 19 19 16" fill="#fff" />
		<path d="M9 28H15L12 31Z" fill="#fff" />
		<path d="M8 11H14L8 19H14" fill="none" stroke="#ff4d79" strokeWidth="2" />
		<path d="M19 2H27L19 9H27" fill="none" stroke="#fff" strokeWidth="2" />
	</svg>
);

const apps = [
	{ key: 'task', Icon: TaskView },
	{ key: 'copilot', Icon: Copilot },
	{ key: 'teams', Icon: Teams },
	{ key: 'files', Icon: Explorer, dot: true },
	{ key: 'edge', Icon: Edge, dot: true },
	{ key: 'store', Icon: Store },
	{ key: 'spotify', Icon: Spotify, dot: true },
	{ key: 'discord', Icon: Discord, dot: true, badge: true },
	{ key: 'radiant', Icon: RIcon, active: true },
	{ key: 'msys', Icon: M2Icon, dot: true },
];

const treeRows = [
	{ label: 'Instances(10)', Icon: InstancesIcon },
	{ label: 'Ports(5)', Icon: PortsIcon },
	{ label: 'Nets(14)', Icon: NetsIcon },
	{ label: 'Clocks(2)', Icon: NetsIcon },
];

export default function App() {
	return (
		<Screen>
			<GlobalStyle />
			<TitleBar>
				<NetlistLogo />
				<TitleText>Netlist Analyzer</TitleText>
				<WindowButtons>
					<svg width="20" height="20" viewBox="0 0 20 20"><path d="M0 10.500H20" stroke="#000" strokeWidth="2" /></svg>
					<svg width="20" height="20" viewBox="0 0 20 20" fill="none" stroke="#000" strokeWidth="2"><rect x="1" y="5" width="14" height="14" rx="3" /><path d="M5 1H15a4 4 0 0 1 4 4V15" /></svg>
					<svg width="20" height="20" viewBox="0 0 20 20"><path d="M0 0L20 20M20 0L0 20" stroke="#111" strokeWidth="2" /></svg>
				</WindowButtons>
			</TitleBar>
			<MenuBar>
				<MenuItem>File</MenuItem>
				<MenuItem>Edit</MenuItem>
				<MenuItem>View</MenuItem>
				<MenuItem>Design</MenuItem>
				<MenuItem>Help</MenuItem>
				<ExpandButton>
					<svg width="24" height="24" viewBox="0 0 24 24"><path d="M6 1H23V19" fill="none" stroke="#70727a" strokeWidth="2.500" /><path d="M16 8L6 18M0 24V12L12 24Z" fill="#70727a" stroke="#70727a" strokeWidth="3" /></svg>
				</ExpandButton>
			</MenuBar>
			<ToolBar>
				<ToolGroup>
					<ZoomIcon><path d="M11 19H27M19 11V27" stroke="#54565f" strokeWidth="2.500" /></ZoomIcon>
					<ZoomIcon><path d="M11 19H27" stroke="#54565f" strokeWidth="3" /></ZoomIcon>
					<ZoomIcon><path d="M13 17V13H17M21 13H25V17M25 21V25H21M17 25H13V21" fill="none" stroke="#4db4f2" strokeWidth="3" /></ZoomIcon>
					<ZoomIcon stroke="#a5a5a5"><rect x="13" y="13" width="12" height="12" fill="#eee" stroke="#b5b5b5" strokeWidth="2.500" /></ZoomIcon>
				</ToolGroup>
			</ToolBar>
			<Body>
				<Rail>
					<RailRule />
					<RailButton><GateDisc><path d="M9 10H16A7 7 0 0 1 16 24H9ZM5 14H9M5 20H9M23 17H32" /></GateDisc></RailButton>
					<RailButton><GateDisc><rect x="10" y="9" width="14" height="16" fill="#d4f5f5" /><path d="M6 13H10M6 21H10M24 13H28M24 21H28M17 5V9M17 25V29" /></GateDisc></RailButton>
					<RailRule />
					<RailButton><Folder /></RailButton>
					<RailButton><DocArrow /></RailButton>
					<RailButton><SelectBox /></RailButton>
					<RailButton $active><PointerTool /></RailButton>
					<RailButton><Hand size={34} color="#4b4b50" fill="#fff" strokeWidth={1.4} style={{ transform: 'rotate(-10deg)' }} /></RailButton>
					<RailButton><SwapDisc /></RailButton>
					<RailRule />
					<RailButton><Hierarchy /></RailButton>
					<RailRule />
					<RailButton><BlueArrow /></RailButton>
					<RailButton><GreyArrow /></RailButton>
					<RailButton><PanelArrow /></RailButton>
					<RailButton><PanelArrow flip /></RailButton>
					<RailButton $menu><NPage /><Caret /></RailButton>
					<RailButton $menu><BookIcon /><Caret /></RailButton>
					<RailButton><Globe /></RailButton>
				</Rail>
				<Main>
					<TopRule />
					<Workspace>
						<TreePanel>
							{treeRows.map(({ label, Icon }) => (
								<TreeRow key={label}>
									<TreeArrow />
									<TreeIcon><Icon /></TreeIcon>
									{label}
								</TreeRow>
							))}
						</TreePanel>
						<CanvasColumn>
							<CanvasRow>
								<SchematicWrap><Schematic /></SchematicWrap>
								<VScroll>
									<ScrollArrow $dir="up" />
									<VThumb />
									<ScrollArrow $dir="down" />
								</VScroll>
							</CanvasRow>
							<HScroll>
								<ScrollArrow $dir="left" />
								<HThumb />
								<ScrollArrow $dir="right" />
								<Corner />
							</HScroll>
						</CanvasColumn>
					</Workspace>
					<TabStrip>
						<NetlistLogo />
						<TabTitle>RTL Netlist - lab3_qm/work (1/1)</TabTitle>
						<TabClose>
							<svg width="14" height="14" viewBox="0 0 14 14"><path d="M1 1L13 13M13 1L1 13" stroke="#9a9a9a" strokeWidth="2" /></svg>
						</TabClose>
					</TabStrip>
				</Main>
			</Body>
			<StatusBar />
			<Taskbar>
				<Weather><WeatherBadge>9</WeatherBadge></Weather>
				<WinLogo />
				<SearchBox>
					<Search size={34} color="#f1f1f1" strokeWidth={2} />
					Search
				</SearchBox>
				{apps.map(({ key, Icon, dot, badge, active }) => (
					<AppSlot key={key} $active={active}>
						<Icon />
						{badge && <AppBadge />}
						{(dot || active) && <RunDot $wide={active} />}
					</AppSlot>
				))}
				<Tray>
					<Chevron />
					<CloudOff />
					<TrayText>ENG</TrayText>
					<QuickGroup>
						<Wifi />
						<VolumeMute />
						<Battery />
					</QuickGroup>
					<Clock>
						<ClockRow>2:04 PM</ClockRow>
						<ClockRow>9/16/2025</ClockRow>
					</Clock>
					<BellSnooze />
				</Tray>
			</Taskbar>
		</Screen>
	);
}
